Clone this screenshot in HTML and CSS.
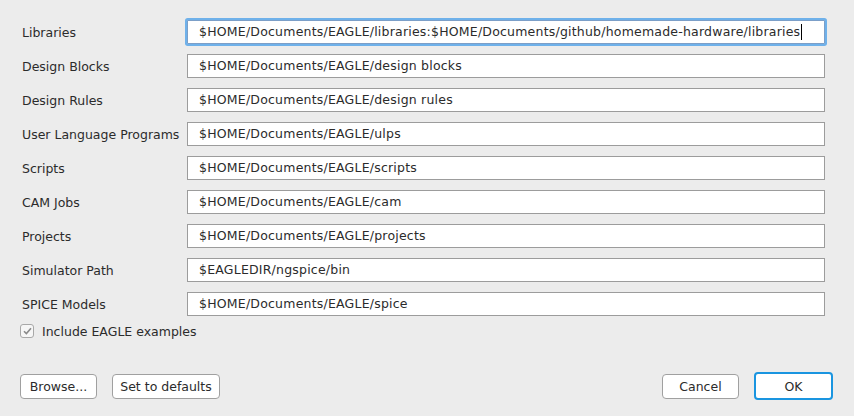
FILE: index.html
```html
<!DOCTYPE html>
<html>
<head>
<meta charset="utf-8">
<link rel="stylesheet" href="styles.css">
</head>
<body>
<div class="dialog">
  <div class="form">
    <div class="row"><span class="label">Libraries</span><div class="field focus">$HOME/Documents/EAGLE/libraries:$HOME/Documents/github/homemade-hardware/libraries<span class="caret"></span></div></div>
    <div class="row"><span class="label">Design Blocks</span><div class="field">$HOME/Documents/EAGLE/design blocks</div></div>
    <div class="row"><span class="label">Design Rules</span><div class="field">$HOME/Documents/EAGLE/design rules</div></div>
    <div class="row"><span class="label">User Language Programs</span><div class="field">$HOME/Documents/EAGLE/ulps</div></div>
    <div class="row"><span class="label">Scripts</span><div class="field">$HOME/Documents/EAGLE/scripts</div></div>
    <div class="row"><span class="label">CAM Jobs</span><div class="field">$HOME/Documents/EAGLE/cam</div></div>
    <div class="row"><span class="label">Projects</span><div class="field">$HOME/Documents/EAGLE/projects</div></div>
    <div class="row"><span class="label">Simulator Path</span><div class="field">$EAGLEDIR/ngspice/bin</div></div>
    <div class="row"><span class="label">SPICE Models</span><div class="field">$HOME/Documents/EAGLE/spice</div></div>
  </div>
  <label class="check"><span class="box"><svg width="9" height="8" viewBox="0 0 9 8"><path d="M1 4.2 L3.4 6.6 L8 1.2" fill="none" stroke="#8a8a8a" stroke-width="1.6"/></svg></span>Include EAGLE examples</label>
  <div class="buttons">
    <div class="left">
      <button class="btn browse">Browse...</button>
      <button class="btn defaults">Set to defaults</button>
    </div>
    <div class="right">
      <button class="btn cancel">Cancel</button>
      <button class="btn ok">OK</button>
    </div>
  </div>
</div>
</body>
</html>
```
FILE: styles.css
```css
html, body {
  margin: 0;
  padding: 0;
  background: #ececec;
}
body {
  font-family: "DejaVu Sans", "Liberation Sans", sans-serif;
  font-size: 12.5px;
  color: #2b2b2b;
}
.dialog {
  width: 854px;
  height: 416px;
  box-sizing: border-box;
  padding: 20px 21px 0 20px;
}
.form {
  display: flex;
  flex-direction: column;
  gap: 10px;
}
.row {
  display: flex;
  align-items: center;
  height: 24px;
}
.label {
  width: 167px;
  padding-left: 2px;
  box-sizing: border-box;
}
.field {
  width: 638px;
  height: 24px;
  box-sizing: border-box;
  border: 1px solid #9c9c9c;
  background: #fff;
  padding: 0 11px;
  line-height: 22px;
  white-space: nowrap;
  letter-spacing: 0.21px;
  display: flex;
  align-items: center;
}
.field.focus {
  border-color: #7c9fc8;
  box-shadow: 0 0 0 2px #6fb1ea;
  border-radius: 1px;
}
.caret {
  display: inline-block;
  width: 1px;
  height: 16px;
  background: #000;
  margin-left: 1px;
}
.check {
  display: flex;
  align-items: center;
  margin-top: 7px;
  height: 16px;
}
.box {
  width: 12px;
  height: 12px;
  border: 1px solid #a8a8a8;
  border-radius: 3px;
  background: #f6f6f6;
  display: flex;
  align-items: center;
  justify-content: center;
  margin-right: 8px;
}
.buttons {
  display: flex;
  justify-content: space-between;
  margin-top: 33px;
}
.left, .right {
  display: flex;
  align-items: center;
}
.left { gap: 15px; }
.right { gap: 15px; }
.btn {
  font-family: inherit;
  font-size: 12.5px;
  color: #2b2b2b;
  background: #fff;
  border: 1px solid #a0a0a0;
  border-radius: 4px;
  height: 25px;
  padding: 0;
}
.browse { width: 77px; }
.defaults { width: 108px; }
.cancel { width: 77px; }
.ok {
  width: 79px;
  height: 28px;
  border: 2px solid #1a95e0;
  border-radius: 4px;
}
```
